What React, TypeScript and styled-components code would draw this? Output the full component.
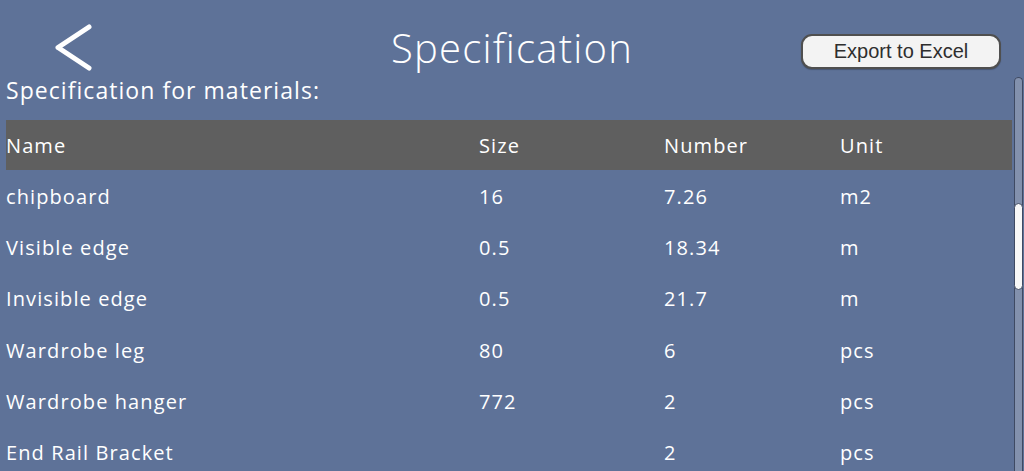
import styled, { createGlobalStyle } from 'styled-components';

const GlobalStyle = createGlobalStyle`
    html, body {
        margin: 0;
        padding: 0;
        background-color: #5e7298;
    }
    * {
        box-sizing: border-box;
    }
`;

const Page = styled.main`
    width: 100%;
    height: 100vh;
    overflow: hidden;
    background-color: #5e7298;
    color: #ffffff;
    font-family: "Open Sans", "DejaVu Sans", sans-serif;
    display: flex;
    flex-direction: column;
`;

const TopBar = styled.header`
    height: 78px;
    flex-shrink: 0;
    display: grid;
    grid-template-columns: 1fr auto 1fr;
    align-items: start;
`;

const BackButton = styled.button`
    justify-self: start;
    margin-left: 52px;
    margin-top: 22px;
    width: 44px;
    height: 52px;
    padding: 0;
    border: none;
    background: transparent;
    cursor: pointer;
    display: flex;
    align-items: center;
    justify-content: center;
`;

const Title = styled.h1`
    margin: 28px 0 0;
    font-size: 40px;
    font-weight: 300;
    letter-spacing: 1.2px;
    line-height: 1;
`;

const ExportButton = styled.button`
    justify-self: end;
    margin-right: 23px;
    margin-top: 34px;
    width: 200px;
    height: 35px;
    border: 2px solid #4f4f4f;
    border-radius: 11px;
    background-color: #f3f3f3;
    color: #2e2e2e;
    font-family: "Liberation Sans", Arial, sans-serif;
    font-size: 20px;
    cursor: pointer;
    box-shadow: 0 1px 1px rgba(0, 0, 0, 0.25);
`;

const Body = styled.section`
    flex: 1;
    display: flex;
    min-height: 0;
    padding-left: 6px;
`;

const Content = styled.div`
    flex: 1;
    display: flex;
    flex-direction: column;
`;

const Subtitle = styled.h2`
    margin: 0;
    height: 42px;
    flex-shrink: 0;
    display: flex;
    align-items: center;
    font-size: 23px;
    font-weight: 500;
    letter-spacing: 1.05px;
    padding-bottom: 18px;
`;

const Row = styled.div<{ $head?: boolean }>`
    display: grid;
    grid-template-columns: 473px 185px 176px 1fr;
    align-items: center;
    flex-shrink: 0;
    height: ${(p) => (p.$head ? '50px' : '51.2px')};
    background-color: ${(p) => (p.$head ? '#5f5f5f' : 'transparent')};
    font-size: 20px;
    letter-spacing: 1.1px;
    padding-top: ${(p) => (p.$head ? '0' : '2px')};
`;

const Cell = styled.span`
    white-space: nowrap;
`;

const ScrollTrack = styled.div`
    width: 9px;
    margin: -1px 1px 0 2px;
    height: 420px;
    border: 1px solid #3f4a63;
    border-bottom: none;
    border-radius: 5px 5px 0 0;
    background-color: #8391ad;
    position: relative;
`;

const ScrollThumb = styled.div`
    position: absolute;
    left: -1px;
    right: -1px;
    top: 125px;
    height: 87px;
    border: 1px solid #3f4a63;
    border-radius: 5px;
    background-color: #f7f7f7;
`;

const rows = [
    ['chipboard', '16', '7.26', 'm2'],
    ['Visible edge', '0.5', '18.34', 'm'],
    ['Invisible edge', '0.5', '21.7', 'm'],
    ['Wardrobe leg', '80', '6', 'pcs'],
    ['Wardrobe hanger', '772', '2', 'pcs'],
    ['End Rail Bracket', '', '2', 'pcs'],
];

export default function App() {
    return (
        <Page>
            <GlobalStyle />
            <TopBar>
                <BackButton aria-label="Back">
                    <svg width="40" height="50" viewBox="0 0 40 50">
                        <path
                            d="M35 4 L4 24.5 L35 45"
                            fill="none"
                            stroke="#ffffff"
                            strokeWidth="5"
                            strokeLinecap="round"
                            strokeLinejoin="round"
                        />
                    </svg>
                </BackButton>
                <Title>Specification</Title>
                <ExportButton>Export to Excel</ExportButton>
            </TopBar>
            <Body>
                <Content>
                    <Subtitle>Specification for materials:</Subtitle>
                    <Row $head>
                        <Cell>Name</Cell>
                        <Cell>Size</Cell>
                        <Cell>Number</Cell>
                        <Cell>Unit</Cell>
                    </Row>
                    {rows.map((r) => (
                        <Row key={r[0]}>
                            {r.map((c, i) => (
                                <Cell key={i}>{c}</Cell>
                            ))}
                        </Row>
                    ))}
                </Content>
                <ScrollTrack>
                    <ScrollThumb />
                </ScrollTrack>
            </Body>
        </Page>
    );
}
